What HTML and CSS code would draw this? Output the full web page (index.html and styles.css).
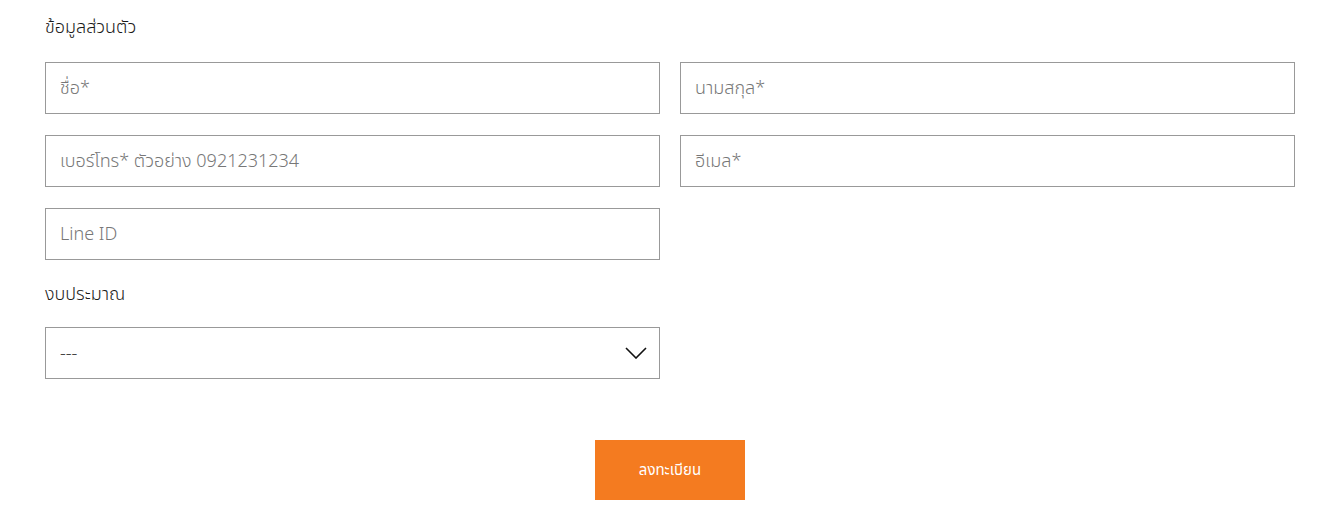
FILE: index.html
```html
<!DOCTYPE html>
<html lang="th">
<head>
<meta charset="utf-8">
<link rel="stylesheet" href="styles.css">
</head>
<body>
<form class="form">
  <h3 class="section-label">ข้อมูลส่วนตัว</h3>
  <div class="grid">
    <input class="field" type="text" placeholder="ชื่อ*">
    <input class="field" type="text" placeholder="นามสกุล*">
    <input class="field" type="text" placeholder="เบอร์โทร* ตัวอย่าง 0921231234">
    <input class="field" type="text" placeholder="อีเมล*">
    <input class="field" type="text" placeholder="Line ID">
  </div>
  <h3 class="section-label budget">งบประมาณ</h3>
  <div class="grid select-grid">
    <div class="select">
      <span class="select-value">---</span>
      <svg class="chevron" width="22" height="12" viewBox="0 0 22 12"><path d="M1 1 L11 11 L21 1" fill="none" stroke="#111" stroke-width="1.6"/></svg>
    </div>
  </div>
  <div class="actions">
    <button type="button" class="submit">ลงทะเบียน</button>
  </div>
</form>
</body>
</html>
```
FILE: styles.css
```css
* { box-sizing: border-box; }
html, body { margin: 0; padding: 0; background: #fff; }
body {
  font-family: "Noto Sans Thai", "Noto Sans", "DejaVu Sans", sans-serif;
  color: #222;
}
.form {
  padding: 14px 40px 0 45px;
}
.section-label {
  margin: 0;
  font-weight: 300;
  font-size: 18px;
  line-height: 28px;
  height: 28px;
  color: #1a1a1a;
}
.budget {
  margin-top: 21px;
}
.grid {
  display: grid;
  grid-template-columns: 1fr 1fr;
  column-gap: 20px;
  row-gap: 21px;
  margin-top: 20px;
}
.select-grid {
  margin-top: 18px;
}
.field, .select {
  height: 52px;
  border: 1px solid #999;
  border-radius: 0;
  padding: 0 14px;
  font-family: inherit;
  font-size: 18px;
  font-weight: 300;
  color: #333;
  background: #fff;
  outline: none;
  width: 100%;
}
.field::placeholder { color: #777; }
.select {
  display: flex;
  align-items: center;
  justify-content: space-between;
  padding-right: 12px;
}
.select-value { color: #444; font-size: 18px; }
.actions {
  display: flex;
  justify-content: center;
  margin-top: 61px;
}
.submit {
  width: 150px;
  height: 60px;
  border: none;
  background: #f47b20;
  color: #fff;
  font-family: inherit;
  font-size: 15px;
  cursor: pointer;
}
```
